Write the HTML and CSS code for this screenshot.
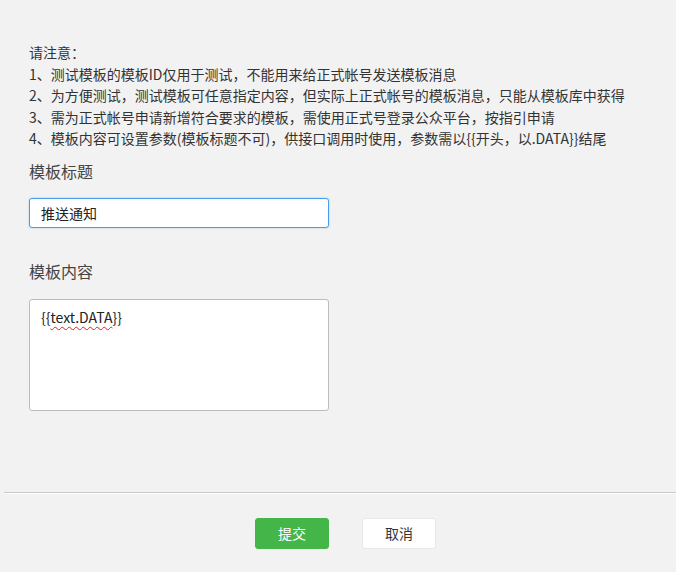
FILE: index.html
```html
<!DOCTYPE html>
<html lang="zh-CN">
<head>
<meta charset="utf-8">
<title>模板</title>
<link rel="stylesheet" href="styles.css">
</head>
<body>
<div class="page">
  <div class="notes">
    <p>请注意：</p>
    <p>1、测试模板的模板ID仅用于测试，不能用来给正式帐号发送模板消息</p>
    <p>2、为方便测试，测试模板可任意指定内容，但实际上正式帐号的模板消息，只能从模板库中获得</p>
    <p>3、需为正式帐号申请新增符合要求的模板，需使用正式号登录公众平台，按指引申请</p>
    <p>4、模板内容可设置参数(模板标题不可)，供接口调用时使用，参数需以{{开头，以.DATA}}结尾</p>
  </div>
  <div class="field">
    <div class="label">模板标题</div>
    <div class="input focused">推送通知</div>
  </div>
  <div class="field">
    <div class="label label-content">模板内容</div>
    <div class="textarea">{{<span class="spell">text.DATA</span>}}</div>
  </div>
</div>
<div class="footer">
  <button class="btn btn-primary" type="button">提交</button>
  <button class="btn btn-default" type="button">取消</button>
</div>
</body>
</html>
```
FILE: styles.css
```css
html, body {
  margin: 0;
  padding: 0;
  background: #f2f2f2;
}
body {
  width: 676px;
  height: 572px;
  overflow: hidden;
  font-family: "Noto Sans CJK SC", "Noto Sans", sans-serif;
  color: #333;
}
.page {
  padding: 42px 0 0 29px;
}
.notes p {
  margin: 0;
  font-size: 14px;
  line-height: 21.5px;
  color: #333;
  white-space: nowrap;
}
.label {
  margin-top: 9px;
  font-size: 16px;
  line-height: 24px;
  color: #444;
}
.label-content {
  margin-top: 31px;
}
.input {
  box-sizing: border-box;
  margin-top: 15px;
  width: 300px;
  height: 30px;
  padding: 0 11px;
  background: #fff;
  border: 1px solid #4a9ee8;
  border-radius: 3px;
  box-shadow: 0 0 2px rgba(74, 158, 232, 0.5);
  font-size: 14px;
  line-height: 28px;
  color: #222;
}
.textarea {
  box-sizing: border-box;
  margin-top: 16px;
  width: 300px;
  height: 112px;
  padding: 6px 11px;
  background: #fff;
  border: 1px solid #bcbcbc;
  border-radius: 3px;
  font-size: 14px;
  line-height: 22px;
  color: #222;
}
.spell {
  text-decoration: underline wavy #e02020;
  text-decoration-thickness: 1px;
  text-underline-offset: 3px;
}
.footer {
  margin: 81px 0 0 4px;
  border-top: 1px solid #c8c8c8;
  box-shadow: inset 0 1px 0 #fff;
  padding: 25px 0 0 11px;
  display: flex;
  justify-content: center;
  gap: 33px;
}
.btn {
  box-sizing: border-box;
  width: 74px;
  height: 31px;
  padding: 0;
  border-radius: 3px;
  font-family: inherit;
  font-size: 14px;
  cursor: pointer;
}
.btn-primary {
  background: #44b549;
  border: 1px solid #44b549;
  color: #fff;
}
.btn-default {
  background: #fff;
  border: 1px solid #e4e8eb;
  color: #353535;
}
```
